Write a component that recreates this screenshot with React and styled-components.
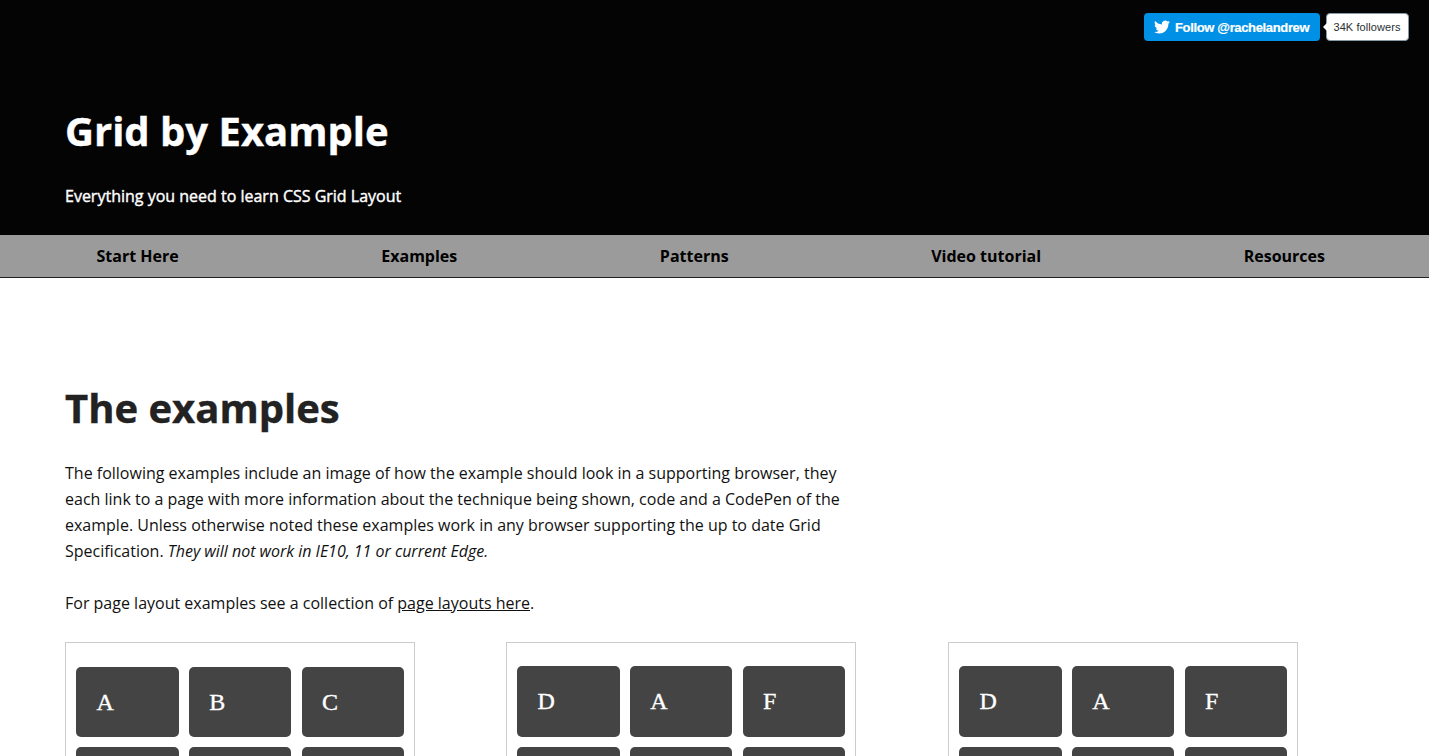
import React from "react";
import styled, { createGlobalStyle } from "styled-components";

const GlobalStyle = createGlobalStyle`
  * { box-sizing: border-box; }
  body { margin: 0; background: #fff; color: #111; font: 16px/26px "Open Sans", sans-serif; overflow: hidden; }
`;
const Page = styled.div`height: 756px; overflow: hidden;`;
const Header = styled.header`height: 235px; background: #040404; color: #fff; padding: 13px 20px 0 65px;`;
const Follow = styled.div`display: flex; justify-content: flex-end; height: 28px; font-family: "Liberation Sans", Arial, sans-serif;`;
const FollowButton = styled.a`
  display: flex; align-items: center; width: 176px; height: 28px; padding-left: 10px; gap: 5px;
  border-radius: 4px; background: #0090e6; color: #fff; font-size: 13px; font-weight: 700; white-space: nowrap;
  letter-spacing: -0.35px; -webkit-text-stroke: 0.2px #fff;
  span { padding-top: 1px; }
`;
const Count = styled.span`
  position: relative; width: 83px; height: 28px; margin-left: 6px; border: 1px solid #8899a6; border-radius: 4px;
  background: #fff; color: #292f33; font-size: 11px; line-height: 27px; text-align: center; letter-spacing: 0.08px; padding-right: 1px;
  &::before { content: ""; position: absolute; left: -4px; top: 9px; border: solid transparent; border-width: 4px 4px 4px 0; border-right-color: #fff; }
`;
const Title = styled.h1`
  margin: ${p => p.$top}px 0 0; color: ${p => p.$color}; font-size: 40px; line-height: 52px; font-weight: 700; white-space: nowrap;
  -webkit-text-stroke: 0.4px ${p => p.$color};
`;
const Tagline = styled.p`margin: 26px 0 0; -webkit-text-stroke: 0.4px #fff;`;
const Nav = styled.nav`
  display: flex; justify-content: space-between; height: 43px; padding: 0 104px 0 96.5px;
  background: #9b9b9b; border-bottom: 1px solid #222; color: #000; font-weight: 700; line-height: 42px;
`;
const Main = styled.main`padding: 0 65px;`;
const Text = styled.p`width: 800px; margin: ${p => p.$top}px 0 0; white-space: nowrap;`;
const Emphasis = styled.em`letter-spacing: -0.02px;`;
const Link = styled.a`text-decoration: underline;`;
const Cards = styled.div`display: grid; grid-template-columns: 441px 442px 350px; margin-top: 26px;`;
const Card = styled.div`
  display: grid; grid-template-columns: repeat(3, 102.5px); grid-auto-rows: ${p => p.$row}px; gap: 10px 10.3px;
  width: 350px; height: 300px; padding: ${p => 94 - p.$row}px 10px 0; border: 1px solid #ccc;
`;
const Cell = styled.div`
  border-radius: 5px; background: #444; color: #fff; padding-left: 20.5px;
  font: 24px/70px "Liberation Serif", "Times New Roman", serif; -webkit-text-stroke: 0.35px #fff;
`;

const cards = [
  { row: 70, cells: ["A", "B", "C", "", "", ""] },
  { row: 70.6, cells: ["D", "A", "F", "", "", ""] },
  { row: 70.6, cells: ["D", "A", "F", "", "", ""] },
];

export default function App() {
  return (
    <Page>
      <GlobalStyle />
      <Header>
        <Follow>
          <FollowButton>
            <svg width="16" height="16" viewBox="0 0 24 24" fill="#fff"><path d="M23.954 4.569a10 10 0 0 1-2.825.775 4.958 4.958 0 0 0 2.163-2.723 9.99 9.99 0 0 1-3.127 1.184 4.92 4.92 0 0 0-8.384 4.482C7.691 8.094 4.066 6.13 1.64 3.161a4.822 4.822 0 0 0-.666 2.475c0 1.71.87 3.213 2.188 4.096a4.904 4.904 0 0 1-2.228-.616v.061a4.923 4.923 0 0 0 3.946 4.827 4.996 4.996 0 0 1-2.212.085 4.937 4.937 0 0 0 4.604 3.417A9.868 9.868 0 0 1 0 19.54a13.995 13.995 0 0 0 7.548 2.212c9.057 0 14.01-7.503 14.01-14.01 0-.213-.005-.425-.014-.636a10.012 10.012 0 0 0 2.41-2.537z" /></svg>
            <span>Follow @rachelandrew</span>
          </FollowButton>
          <Count>34K followers</Count>
        </Follow>
        <Title $top={64} $color="#fff">Grid by Example</Title>
        <Tagline>Everything you need to learn CSS Grid Layout</Tagline>
      </Header>
      <Nav><span>Start Here</span><span>Examples</span><span>Patterns</span><span>Video tutorial</span><span>Resources</span></Nav>
      <Main>
        <Title $top={104} $color="#222">The examples</Title>
        <Text $top={26}>
          The following examples include an image of how the example should look in a supporting browser, they<br />
          each link to a page with more information about the technique being shown, code and a CodePen of the<br />
          example. Unless otherwise noted these examples work in any browser supporting the up to date Grid<br />
          Specification. <Emphasis>They will not work in IE10, 11 or current Edge.</Emphasis>
        </Text>
        <Text $top={26}>For page layout examples see a collection of <Link>page layouts here</Link>.</Text>
        <Cards>
          {cards.map(({ row, cells }, i) => (
            <Card key={i} $row={row}>{cells.map((c, j) => <Cell key={j}>{c}</Cell>)}</Card>
          ))}
        </Cards>
      </Main>
    </Page>
  );
}
